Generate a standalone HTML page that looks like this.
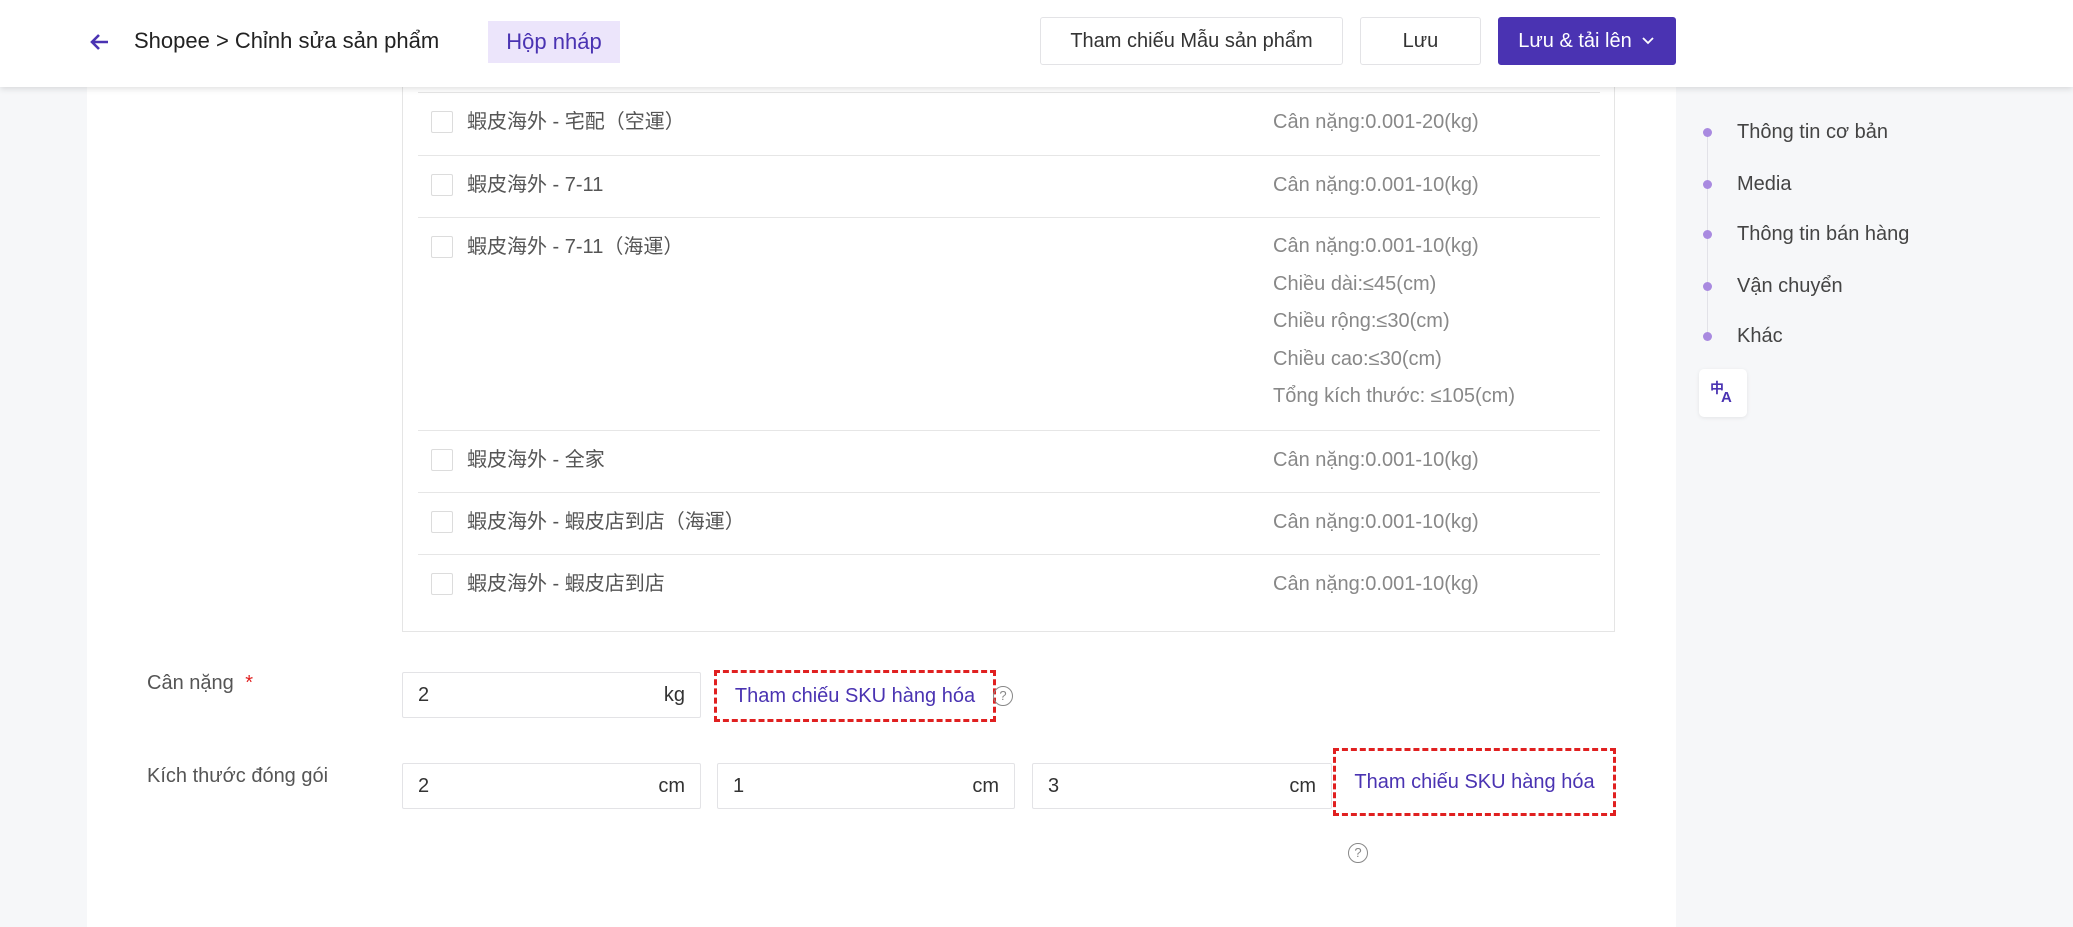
<!DOCTYPE html>
<html><head><meta charset="utf-8"><style>
*{box-sizing:border-box;margin:0;padding:0}
body{width:2073px;height:927px;overflow:hidden;background:#f6f7f9;font-family:"Liberation Sans","Noto Sans CJK SC",sans-serif;color:#333;position:relative}
.abs{position:absolute}
#hdr{left:0;top:0;width:2073px;height:87px;background:#fff;box-shadow:0 2px 6px rgba(0,0,0,.12);z-index:5}
.btn{position:absolute;top:17px;height:48px;border:1px solid #e3e3e6;border-radius:3px;background:#fff;font-size:20px;color:#333;display:flex;align-items:center;justify-content:center}
#card{left:87px;top:87px;width:1589px;height:840px;background:#fff}
#tbl{left:402px;top:87px;width:1213px;height:545px;border:1px solid #e5e5e5;border-top:none}
.sep{position:absolute;left:418px;width:1182px;height:1px;background:#e6e6e6}
.cb{position:absolute;left:431px;width:22px;height:22px;border:1px solid #dcdcdc;border-radius:2px;background:#fff}
.t{position:absolute;font-size:20px;line-height:24px;color:#555;white-space:nowrap}
.g{color:#888}
.inp{position:absolute;height:46px;border:1px solid #e3e3e6;border-radius:2px;background:#fff;font-size:20px;color:#333}
.inp span{position:absolute;top:11px}
.sku{position:absolute;border:3px dashed #e02020;color:#4a33b2;font-size:20px;display:flex;align-items:center;justify-content:center}
.q{position:absolute;width:20px;height:20px;border:1.5px solid #888;border-radius:50%;font-size:13px;color:#888;text-align:center;line-height:17px}
.nav{position:absolute;left:1737px;font-size:20px;color:#444}
.dot{position:absolute;left:1703px;width:9px;height:9px;border-radius:50%;background:#a98ae0}
</style></head><body>
<div id="card" class="abs"></div>
<div id="hdr" class="abs">
 <svg class="abs" style="left:88px;top:30px" width="24" height="24" viewBox="0 0 24 24"><path d="M20 12H5M11 5l-7 7 7 7" stroke="#4a33b2" stroke-width="2.6" fill="none"/></svg>
 <div class="abs" style="left:134px;top:28px;font-size:22px;color:#222">Shopee &gt; Chỉnh sửa sản phẩm</div>
 <div class="abs" style="left:488px;top:21px;width:132px;height:42px;background:#ece5fb;color:#4a33b2;font-size:22px;line-height:42px;text-align:center">Hộp nháp</div>
 <div class="btn" style="left:1040px;width:303px">Tham chiếu Mẫu sản phẩm</div>
 <div class="btn" style="left:1360px;width:121px">Lưu</div>
 <div class="btn" style="left:1498px;width:178px;background:#4a33b2;border-color:#4a33b2;color:#fff">Lưu &amp; tải lên <svg width="16" height="12" viewBox="0 0 16 12" style="margin-left:8px"><path d="M3 3l5 5 5-5" stroke="#fff" stroke-width="1.8" fill="none"/></svg></div>
</div>
<div id="tbl" class="abs"></div>
<div class="sep" style="top:92px"></div>
<div class="sep" style="top:155px"></div>
<div class="sep" style="top:217px"></div>
<div class="sep" style="top:430px"></div>
<div class="sep" style="top:492px"></div>
<div class="sep" style="top:554px"></div>

<div class="cb" style="top:111px"></div><div class="t" style="left:467px;top:110px">蝦皮海外 - 宅配（空運）</div>
<div class="t g" style="left:1273px;top:110px">Cân nặng:0.001-20(kg)</div>
<div class="cb" style="top:174px"></div><div class="t" style="left:467px;top:173px">蝦皮海外 - 7-11</div>
<div class="t g" style="left:1273px;top:173px">Cân nặng:0.001-10(kg)</div>
<div class="cb" style="top:236px"></div><div class="t" style="left:467px;top:235px">蝦皮海外 - 7-11（海運）</div>
<div class="t g" style="left:1273px;top:235px;line-height:37.6px;margin-top:-7px">Cân nặng:0.001-10(kg)<br>Chiều dài:≤45(cm)<br>Chiều rộng:≤30(cm)<br>Chiều cao:≤30(cm)<br>Tổng kích thước: ≤105(cm)</div>
<div class="cb" style="top:449px"></div><div class="t" style="left:467px;top:448px">蝦皮海外 - 全家</div>
<div class="t g" style="left:1273px;top:448px">Cân nặng:0.001-10(kg)</div>
<div class="cb" style="top:511px"></div><div class="t" style="left:467px;top:510px">蝦皮海外 - 蝦皮店到店（海運）</div>
<div class="t g" style="left:1273px;top:510px">Cân nặng:0.001-10(kg)</div>
<div class="cb" style="top:573px"></div><div class="t" style="left:467px;top:572px">蝦皮海外 - 蝦皮店到店</div>
<div class="t g" style="left:1273px;top:572px">Cân nặng:0.001-10(kg)</div>

<div class="t" style="left:147px;top:671px">Cân nặng <span style="color:#e02020;margin-left:6px">*</span></div>
<div class="inp" style="left:402px;top:672px;width:299px"><span style="left:15px">2</span><span style="right:15px">kg</span></div>
<div class="sku" style="left:714px;top:670px;width:282px;height:52px">Tham chiếu SKU hàng hóa</div>
<div class="q" style="left:993px;top:686px">?</div>

<div class="t" style="left:147px;top:764px">Kích thước đóng gói</div>
<div class="inp" style="left:402px;top:763px;width:299px"><span style="left:15px">2</span><span style="right:15px">cm</span></div>
<div class="inp" style="left:717px;top:763px;width:298px"><span style="left:15px">1</span><span style="right:15px">cm</span></div>
<div class="inp" style="left:1032px;top:763px;width:300px"><span style="left:15px">3</span><span style="right:15px">cm</span></div>
<div class="sku" style="left:1333px;top:748px;width:283px;height:68px">Tham chiếu SKU hàng hóa</div>
<div class="q" style="left:1348px;top:843px">?</div>

<div class="abs" style="left:1707px;top:134px;width:1px;height:200px;background:#e2e2e8"></div>
<div class="dot" style="top:128px"></div><div class="nav" style="top:121px">Thông tin cơ bản</div>
<div class="dot" style="top:180px"></div><div class="nav" style="top:173px">Media</div>
<div class="dot" style="top:230px"></div><div class="nav" style="top:223px">Thông tin bán hàng</div>
<div class="dot" style="top:282px"></div><div class="nav" style="top:275px">Vận chuyển</div>
<div class="dot" style="top:332px"></div><div class="nav" style="top:325px">Khác</div>
<div class="abs" style="left:1699px;top:369px;width:48px;height:48px;background:#fff;border-radius:5px;box-shadow:0 1px 4px rgba(0,0,0,.08)">
 <div class="abs" style="left:11px;top:9px;font-size:14px;color:#4a33b2;font-weight:bold">中</div>
 <div class="abs" style="left:22px;top:20px;font-size:15px;color:#4a33b2;font-weight:bold">A</div>
</div>
</body></html>
